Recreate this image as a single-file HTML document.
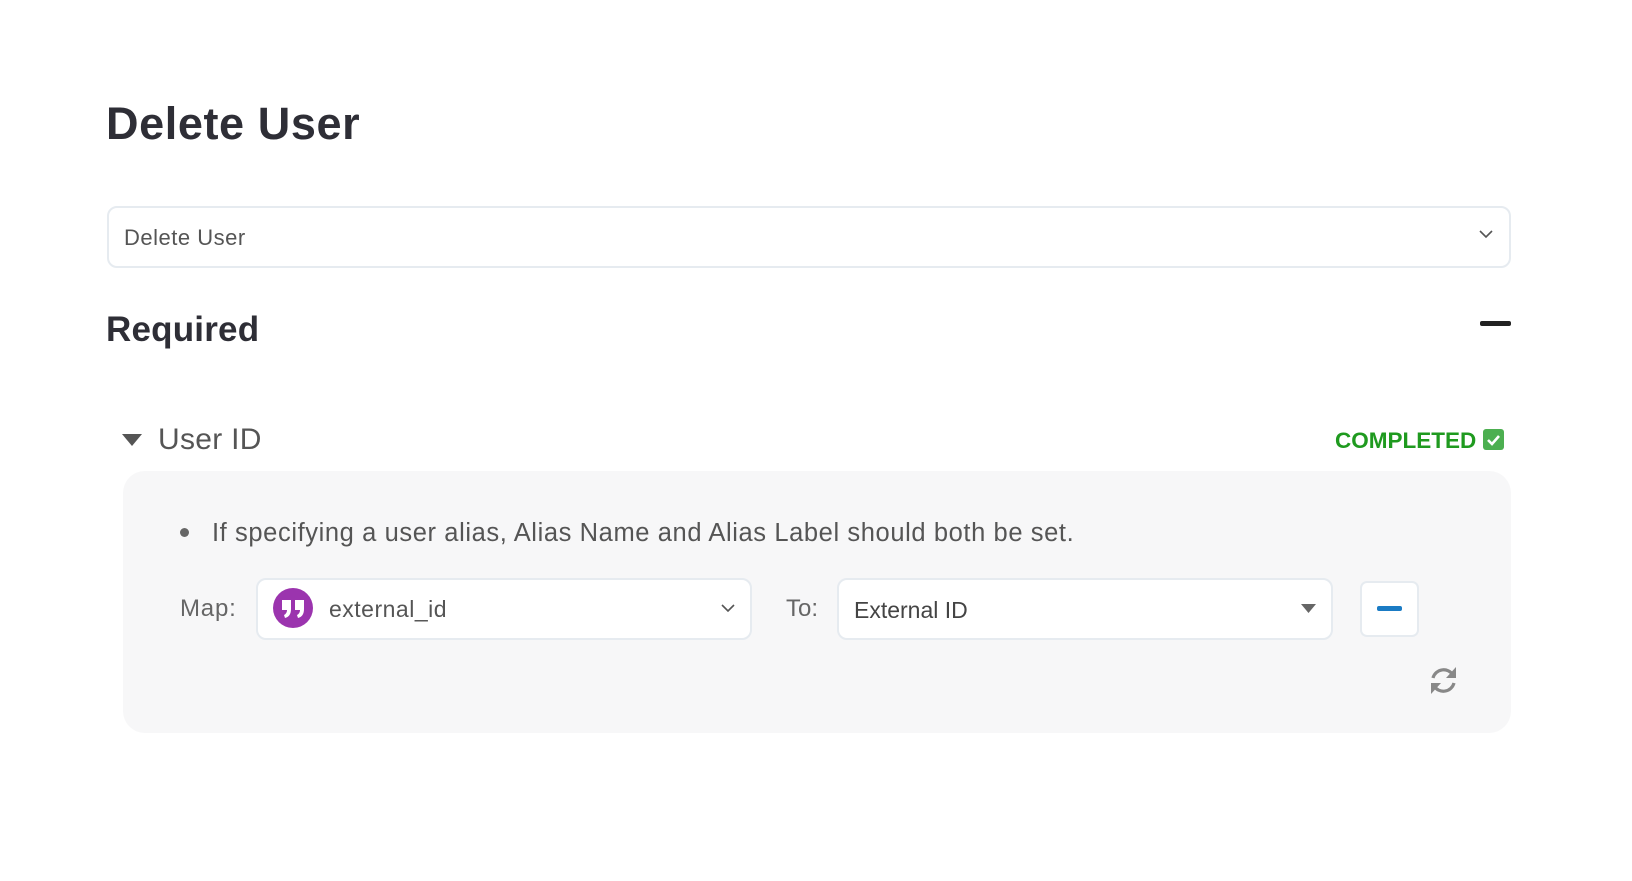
<!DOCTYPE html>
<html><head><meta charset="utf-8"><style>
*{box-sizing:border-box;margin:0;padding:0}
body{width:1632px;height:881px;background:#fff;font-family:"Liberation Sans",sans-serif;position:relative;overflow:hidden;color:#2f2f36}
.a{position:absolute}
</style></head><body>
<div class="a" style="left:106px;top:96px;font-size:45px;font-weight:600;color:#2e2e36;line-height:56px;letter-spacing:0.6px">Delete User</div>
<div class="a" style="left:107px;top:206px;width:1404px;height:62px;border:2px solid #e6ebf0;border-radius:10px"></div>
<div class="a" style="left:124px;top:224px;font-size:22px;color:#555;line-height:28px;letter-spacing:0.5px">Delete User</div>
<svg class="a" style="left:1478px;top:228px" width="16" height="12" viewBox="0 0 16 12"><path d="M2 3l6 6 6-6" fill="none" stroke="#555" stroke-width="1.6"/></svg>
<div class="a" style="left:106px;top:309px;font-size:35px;font-weight:600;color:#2e2e36;line-height:42px;letter-spacing:0.2px">Required</div>
<div class="a" style="left:1480px;top:321px;width:31px;height:5px;background:#222;border-radius:2px"></div>
<svg class="a" style="left:122px;top:433px" width="20" height="14"><path d="M0 1h20L10 13z" fill="#555"/></svg>
<div class="a" style="left:158px;top:422px;font-size:30px;color:#555;line-height:36px;letter-spacing:0.3px">User ID</div>
<div class="a" style="left:1335px;top:427px;font-size:22.5px;font-weight:600;color:#1f9a1f;line-height:28px">COMPLETED</div>
<div class="a" style="left:1483px;top:429px;width:21px;height:21px;background:#4caf50;border-radius:3px"></div>
<svg class="a" style="left:1483px;top:429px" width="21" height="21"><path d="M5 11l4 4 7-8" fill="none" stroke="#fff" stroke-width="2.6"/></svg>
<div class="a" style="left:123px;top:471px;width:1388px;height:262px;background:#f7f7f8;border-radius:22px"></div>
<div class="a" style="left:180px;top:528px;width:9px;height:9px;background:#666;border-radius:50%"></div>
<div class="a" style="left:212px;top:517px;font-size:25.5px;color:#555;line-height:32px;letter-spacing:0.6px">If specifying a user alias, Alias Name and Alias Label should both be set.</div>
<div class="a" style="left:180px;top:594px;font-size:24px;color:#666;line-height:30px;letter-spacing:0.8px">Map:</div>
<div class="a" style="left:256px;top:578px;width:496px;height:62px;background:#fff;border:2px solid #e6ebf0;border-radius:10px"></div>
<svg class="a" style="left:273px;top:588px" width="40" height="40" viewBox="0 0 40 40"><circle cx="20" cy="20" r="20" fill="#9b34ae"/><path d="M9 12h9v9c0 5-2 8-6 9l-1-3c2-1 3-3 3-5h-5z M22 12h9v9c0 5-2 8-6 9l-1-3c2-1 3-3 3-5h-5z" fill="#fff"/></svg>
<div class="a" style="left:329px;top:595px;font-size:23px;color:#555;line-height:28px;letter-spacing:0.5px">external_id</div>
<svg class="a" style="left:720px;top:602px" width="16" height="12"><path d="M2 3l6 6 6-6" fill="none" stroke="#555" stroke-width="1.6"/></svg>
<div class="a" style="left:786px;top:594px;font-size:24px;color:#666;line-height:30px">To:</div>
<div class="a" style="left:837px;top:578px;width:496px;height:62px;background:#fff;border:2px solid #e6ebf0;border-radius:10px"></div>
<div class="a" style="left:854px;top:596px;font-size:23px;color:#444;line-height:28px">External ID</div>
<svg class="a" style="left:1301px;top:604px" width="15" height="9"><path d="M0 0h15L7.5 9z" fill="#666"/></svg>
<div class="a" style="left:1360px;top:581px;width:59px;height:56px;background:#fff;border:2px solid #e6ebf0;border-radius:7px"></div>
<div class="a" style="left:1377px;top:606px;width:25px;height:5px;background:#1a7bc4;border-radius:2px"></div>
<svg class="a" style="left:1429px;top:666px" width="29" height="29" viewBox="0 0 29 29"><g fill="none" stroke="#888" stroke-width="3.2"><path d="M4 12A11 11 0 0 1 24 9"/><path d="M25 17A11 11 0 0 1 5 20"/></g><path d="M27 1v11h-10z" fill="#888"/><path d="M2 28v-11h10z" fill="#888"/></svg>
</body></html>
